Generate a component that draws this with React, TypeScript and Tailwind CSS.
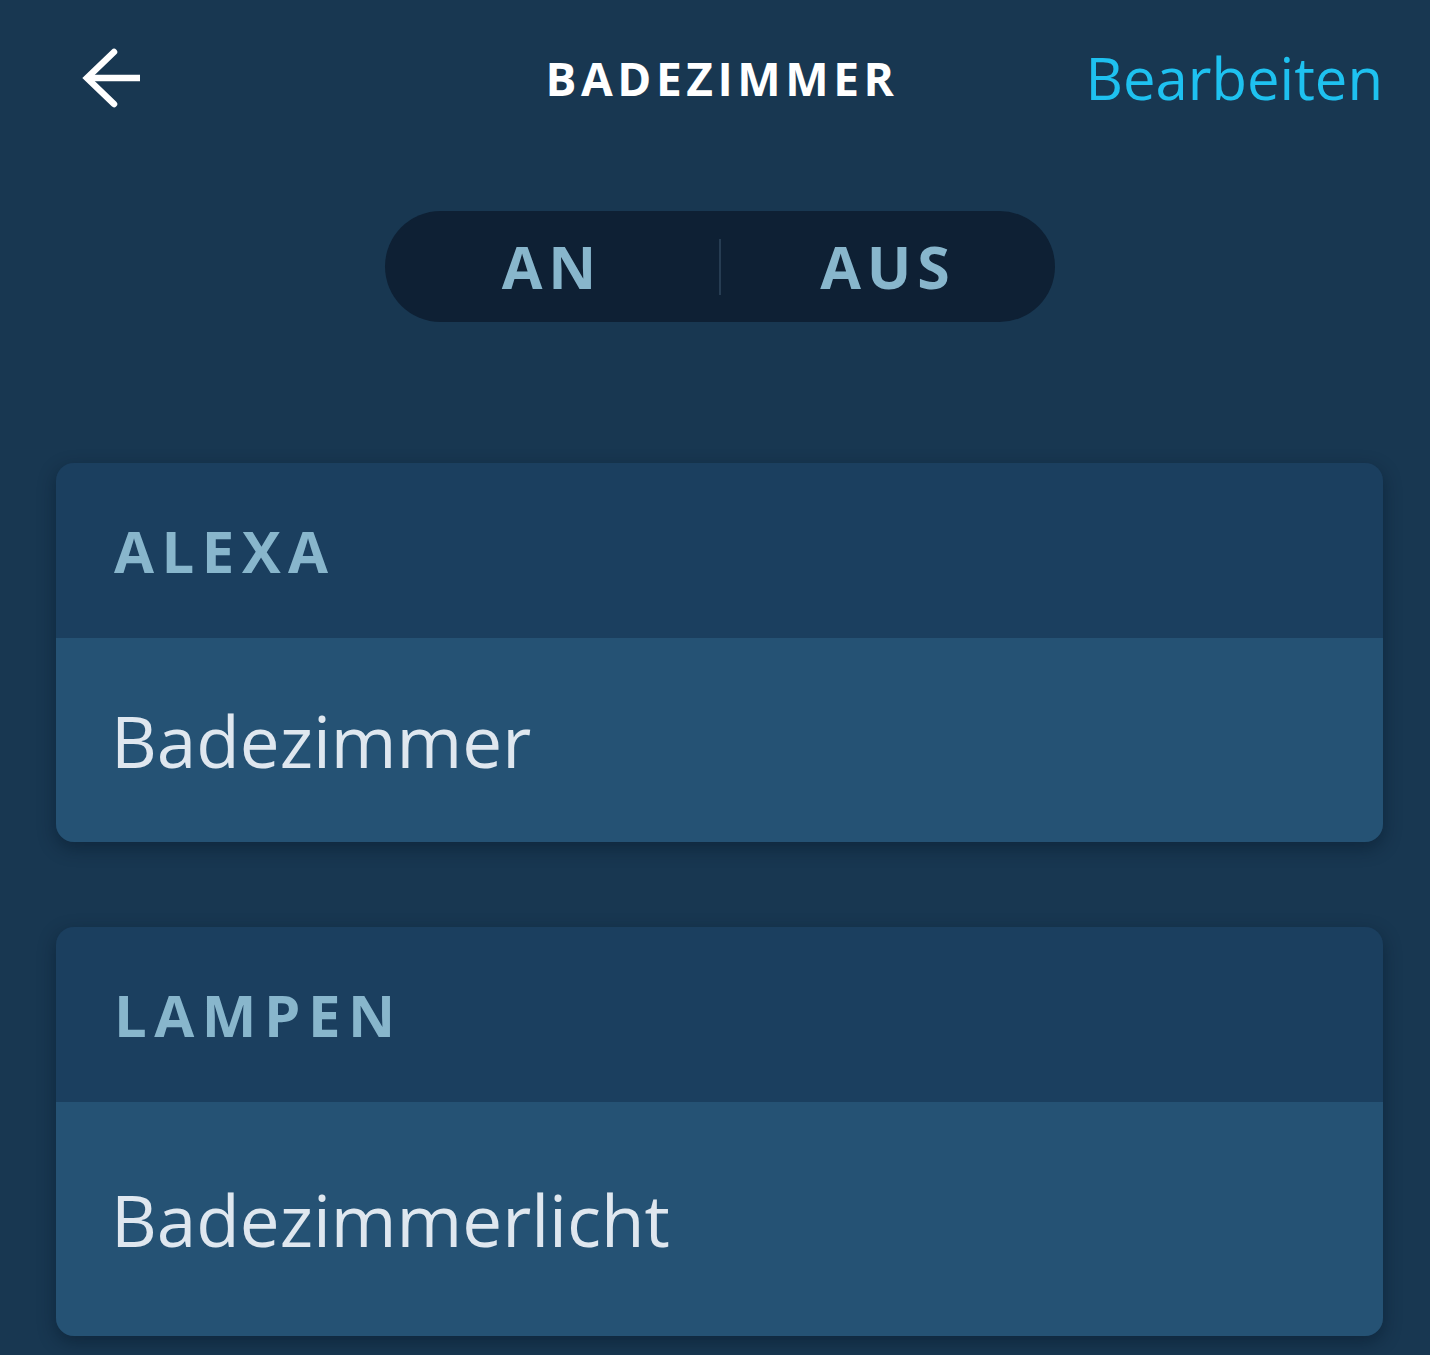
import React from 'react';

const font = { fontFamily: '"Open Sans", "Noto Sans", sans-serif' };

function BackArrow() {
  return (
    <svg width="60" height="60" viewBox="0 0 60 60" fill="none">
      <path d="M58 30H6" stroke="white" strokeWidth="6.5" />
      <path d="M32 4L5 30L32 56" stroke="white" strokeWidth="6.5" strokeLinecap="round" strokeLinejoin="miter" />
    </svg>
  );
}

function Section({ label, item, bodyHeight }: { label: string; item: string; bodyHeight: string }) {
  return (
    <div className="rounded-[18px] overflow-hidden shadow-[0_6px_18px_rgba(5,20,35,0.45)]">
      <div className="h-[175px] bg-[#1b3f5f] flex items-center pl-[58px]">
        <span className="text-[58px] font-bold tracking-[0.13em] text-[#88b6cc] leading-none">
          {label}
        </span>
      </div>
      <div className={`${bodyHeight} bg-[#255274] flex items-center pl-[55px]`}>
        <span className="text-[71px] text-[#dfe7ef] leading-none">{item}</span>
      </div>
    </div>
  );
}

export default function App() {
  return (
    <div className="w-[1430px] h-[1355px] bg-[#183751] overflow-hidden" style={font}>
      {/* Top bar */}
      <div className="h-[156px] flex items-center justify-between pl-[82px] pr-[47px] relative">
        <BackArrow />
        <h1 className="absolute left-0 right-0 text-center pl-[14px] text-[46px] font-bold tracking-[0.1em] text-white leading-none pointer-events-none">
          BADEZIMMER
        </h1>
        <button className="text-[58px] text-[#1ec1f0] leading-none">Bearbeiten</button>
      </div>

      {/* An / Aus toggle */}
      <div className="flex justify-center pl-[10px] mt-[55px]">
        <div className="w-[670px] h-[111px] rounded-full bg-[#0e2034] flex items-center">
          <button className="flex-1 text-center text-[59px] font-bold tracking-[0.1em] text-[#88b6cc] leading-none">
            AN
          </button>
          <div className="w-[2px] h-[56px] bg-[#263c52]" />
          <button className="flex-1 text-center text-[59px] font-bold tracking-[0.1em] text-[#88b6cc] leading-none">
            AUS
          </button>
        </div>
      </div>

      {/* Groups */}
      <div className="flex flex-col gap-[85px] pl-[56px] pr-[47px] mt-[141px]">
        <Section label="ALEXA" item="Badezimmer" bodyHeight="h-[204px]" />
        <Section label="LAMPEN" item="Badezimmerlicht" bodyHeight="h-[234px]" />
      </div>
    </div>
  );
}
